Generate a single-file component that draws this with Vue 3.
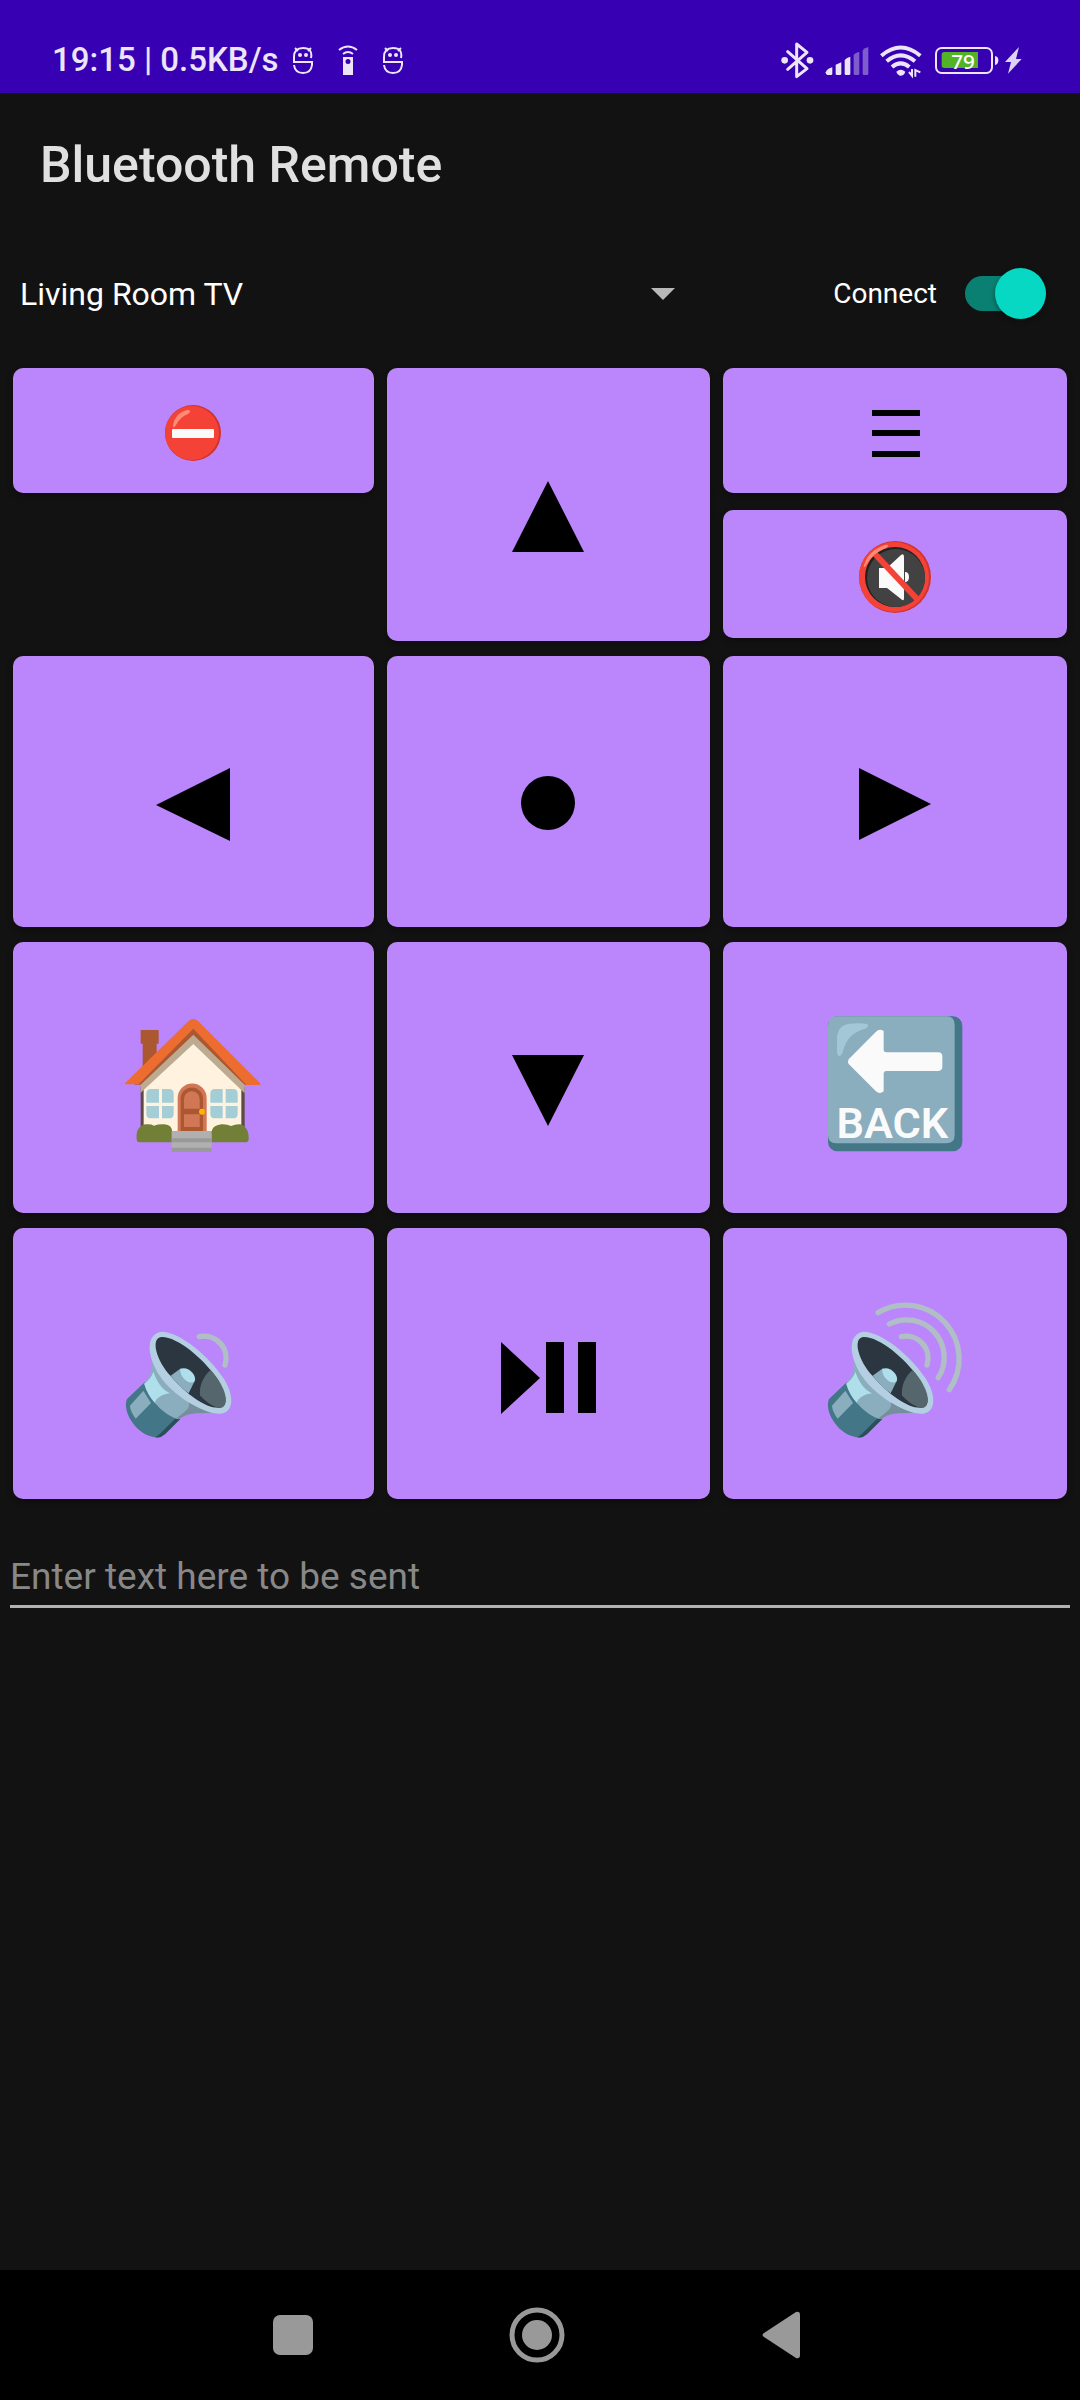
<script setup>
import { ref } from 'vue'

const device = ref('Living Room TV')
const connected = ref(true)
const message = ref('')

const nearWave = 'M274 171A66 66 0 0 1 351 256'
const volumeKeys = [
  { label: 'Volume down', box: '33 28 450 450', waves: [nearWave] },
  {
    label: 'Volume up',
    box: '30 28 450 450',
    waves: [nearWave, 'M238 133A113 113 0 0 1 385 294', 'M204 99A161 161 0 0 1 418 330']
  }
]
</script>

<template>
  <div class="screen">
    <header class="status">
      <div class="status-left">
        <span class="clock">19:15 | 0.5KB/s</span>
        <svg class="note" viewBox="0 0 20 40" aria-hidden="true">
          <path d="M18 18Q20 8 10 8Q1 8 1 17V22H19V25Q18 33 10 33Q2 33 1 25M2 8L5 11M18 8L15 11" fill="none" stroke="#ebe5f7" stroke-width="2" />
          <circle cx="7" cy="15" r="2" fill="#ebe5f7" /><circle cx="13" cy="15" r="2" fill="#ebe5f7" />
        </svg>
        <svg class="note" viewBox="0 0 20 40" aria-hidden="true">
          <path d="M1 10Q10 3 19 10M5 14Q10 10 15 14" fill="none" stroke="#ebe5f7" stroke-width="2" />
          <path fill="#ebe5f7" fill-rule="evenodd" d="M5 17H15V35H5ZM10 19A2 2 0 1 0 10 24A2 2 0 1 0 10 19" />
        </svg>
        <svg class="note" viewBox="0 0 20 40" aria-hidden="true">
          <path d="M18 18Q20 8 10 8Q1 8 1 17V22H19V25Q18 33 10 33Q2 33 1 25M2 8L5 11M18 8L15 11" fill="none" stroke="#ebe5f7" stroke-width="2" />
          <circle cx="7" cy="15" r="2" fill="#ebe5f7" /><circle cx="13" cy="15" r="2" fill="#ebe5f7" />
        </svg>
      </div>
      <div class="status-right">
        <svg width="35" height="40" viewBox="120 60 105 120" aria-hidden="true">
          <path d="M143 95L201 146L170 170V72L201 97L143 148" fill="none" stroke="#ebe5f7" stroke-width="9" stroke-linejoin="round" stroke-linecap="round" />
          <circle cx="134" cy="121" r="10" fill="#ebe5f7" /><circle cx="210" cy="121" r="10" fill="#ebe5f7" />
        </svg>
        <svg width="44" height="40" viewBox="255 60 132 120" aria-hidden="true">
          <g fill="#ebe5f7">
            <path d="M257 157Q262 145 277 142V161Q277 165 273 165H262Q257 165 257 157Z" />
            <path d="M287 134L304 127V161Q304 165 300 165H291Q287 165 287 161Z" />
            <path d="M314 120Q320 112 331 110V161Q331 165 327 165H318Q314 165 314 161Z" />
            <path opacity="0.4" d="M341 104Q347 98 358 95V161Q358 165 354 165H345Q341 165 341 161Z" />
            <path opacity="0.4" d="M368 91Q374 84 385 81V161Q385 165 381 165H372Q368 165 368 161Z" />
          </g>
        </svg>
        <svg width="44" height="40" viewBox="417 60 132 120" aria-hidden="true">
          <g fill="none" stroke="#ebe5f7" stroke-width="12">
            <path d="M424 107Q482 58 541 107" /><path d="M440 124Q482 88 525 124" /><path d="M456 141Q482 119 508 141" />
          </g>
          <path fill="#ebe5f7" d="M469 155Q482 143 496 155Q492 167 482 167Q473 166 469 155Z" />
          <path d="M507 156L516 167V147M526 170V150L541 157" fill="none" stroke="#ebe5f7" stroke-width="6" />
        </svg>
        <svg width="89" height="40" viewBox="579 60 267 120" role="img" aria-label="Battery 79 percent, charging">
          <rect x="588" y="84" width="168" height="75" rx="17" fill="none" stroke="#ebe5f7" stroke-width="6" />
          <path d="M613 96H714V144H613Q605 144 605 136V104Q605 96 613 96Z" fill="#52b424" />
          <path d="M765 108Q775 109 775 121T765 135Z" fill="#ebe5f7" />
          <text x="669" y="147" text-anchor="middle" class="charge">79</text>
          <path d="M837 81L795 126H813L804 161L845 117H828Z" fill="#dcd2f2" />
        </svg>
      </div>
    </header>

    <h1 class="title">Bluetooth Remote</h1>

    <div class="device-row">
      <div class="picker">
        <select v-model="device" aria-label="Device">
          <option>Living Room TV</option>
        </select>
      </div>
      <label class="connect">
        <span>Connect</span>
        <input v-model="connected" type="checkbox" role="switch" />
      </label>
    </div>

    <main class="pad">
      <div class="stack">
        <button class="key" aria-label="Power off">
          <svg width="100" height="100" viewBox="1 0 100 100">
            <circle cx="50" cy="52" r="28" fill="#cf3331" /><circle cx="49" cy="52" r="27" fill="#f44336" />
            <rect x="29" y="48" width="42" height="9" rx="1" fill="#fafafa" />
            <path d="M30 44Q32 32 44 29Q50 29 45 33Q37 36 33 44Q30 49 30 44Z" fill="#ff8a75" />
          </svg>
        </button>
      </div>
      <button class="key" aria-label="Up">
        <svg width="150" height="150" viewBox="1 0 150 150"><path d="M75 51L111 122H39Z" /></svg>
      </button>
      <div class="stack">
        <button class="key" aria-label="Menu">
          <svg width="100" height="100" viewBox="0 0 100 100"><path d="M27 29H75V35H27ZM27 49H75V55H27ZM27 70H75V76H27Z" /></svg>
        </button>
        <button class="key" aria-label="Mute">
          <svg width="100" height="100" viewBox="0 0 100 100">
            <circle cx="50" cy="53" r="36" fill="#cf3331" /><circle cx="49" cy="53" r="35" fill="#f44336" />
            <circle cx="50" cy="53" r="30" fill="#212121" /><circle cx="51" cy="54" r="29" fill="#424242" />
            <path d="M34 44H42L56 31Q59 29 59 33V74Q59 78 56 75L42 64H34Z" fill="#fafafa" />
            <path d="M60 48Q64 48 64 53T60 58Z" fill="#fafafa" />
            <path d="M30 30L73 76" stroke="#f44336" stroke-width="6" />
            <path d="M19 41Q24 26 40 21Q46 20 41 24Q28 29 22 40Q18 46 19 41Z" fill="#ff8a75" />
          </svg>
        </button>
      </div>

      <button class="key" aria-label="Left">
        <svg width="150" height="150" viewBox="1 0 150 150"><path d="M38 88L112 51V124Z" /></svg>
      </button>
      <button class="key" aria-label="Select">
        <svg width="150" height="150" viewBox="0 0 150 150"><circle cx="74" cy="86" r="27" /></svg>
      </button>
      <button class="key" aria-label="Right">
        <svg width="150" height="150" viewBox="0 0 150 150"><path d="M39 51L111 87L39 123Z" /></svg>
      </button>

      <button class="key" aria-label="Home">
        <svg width="150" height="150" viewBox="58 9 450 450">
          <path fill="#ab5730" d="M123 90H177V131H171V170L129 208V131H123Z" />
          <path fill="#5d4a43" d="M123 260H435V400H123Z" />
          <path fill="#fff3e0" d="M281 125L425 262V394H132V262Z" />
          <path fill="#bcaa91" d="M281 97L435 247V280L281 132L123 278V247Z" />
          <path fill="#ab5730" d="M281 80L455 254H435L281 104L123 254H104Z" />
          <path fill="#ed6c30" d="M76 250L266 64Q281 49 296 64L482 250Q484 255 478 255H440L281 86L117 253H80Q75 253 76 250Z" />
          <path fill="#d27756" d="M234 394V295A43 44 0 0 1 321 295V394Z" />
          <path fill="#ab5730" d="M243 394V297A33 34 0 0 1 310 297V394Z" />
          <path fill="#d27756" d="M253 326V298A23 24 0 0 1 300 298V326ZM253 343H300V381H253Z" />
          <circle cx="307" cy="335" r="9" fill="#ffb300" />
          <path fill="#a5cdd5" d="M154 267H178V308H140V281Q140 267 154 267ZM187 267H208Q222 267 222 281V308H187ZM140 318H178V355H154Q140 355 140 341ZM187 318H222V341Q222 355 208 355H187ZM346 267H369V308H332V281Q332 267 346 267ZM378 267H400Q414 267 414 281V308H378ZM332 318H369V355H346Q332 355 332 341ZM378 318H414V341Q414 355 400 355H378Z" />
          <path fill="#728037" d="M111 418C108 390 120 374 140 373Q155 372 163 377Q176 372 194 373Q218 374 218 398V427H120Q111 427 111 418ZM335 427V398Q337 376 365 373Q382 372 394 378Q408 372 421 373C438 376 449 395 447 418Q447 427 438 427Z" />
          <path fill="#b0b0b0" d="M216 393H336V456H216Z" /><path fill="#999" d="M216 415H336V427H216ZM216 443H336V456H216Z" />
        </svg>
      </button>
      <button class="key" aria-label="Down">
        <svg width="150" height="150" viewBox="1 1 150 150"><path d="M39 53H111L75 124Z" /></svg>
      </button>
      <button class="key" aria-label="Back">
        <svg width="150" height="150" viewBox="30 8 450 450">
          <rect x="54" y="48" width="403" height="405" rx="28" fill="#437687" />
          <path fill="#8baebf" d="M82 48H410Q434 48 434 74V404Q434 429 409 429H78Q54 429 54 404V76Q54 48 82 48Z" />
          <path fill="#a2c7d7" d="M81 150V110Q84 74 120 70Q150 67 171 71Q180 77 166 85Q115 98 101 145Q96 167 87 167Q81 166 81 150Z" />
          <path fill="#fafafa" d="M116 177L198 94Q208 84 221 92V150Q222 156 229 156H385Q397 157 397 168V200Q397 211 385 212H229Q222 212 221 219V273Q209 284 197 272L116 191Q112 184 116 177Z" />
          <text x="247" y="412" text-anchor="middle" class="back-text">BACK</text>
        </svg>
      </button>

      <button class="key" :aria-label="volumeKeys[0].label">
        <svg width="150" height="150" :viewBox="volumeKeys[0].box">
          <symbol id="speaker" viewBox="0 0 540 540">
            <path fill="#437687" d="M110 308L57 358C40 395 90 478 156 473L216 418C175 395 135 360 110 308Z" />
            <path fill="#2a4f5b" d="M142 473Q158 476 172 463L217 418L206 413L156 462Q148 468 142 473Z" />
            <path fill="#8baebf" d="M132 215C137 270 128 290 108 312C125 360 165 405 212 419C238 398 270 400 310 398Z" />
            <path fill="#b0dfec" d="M136 276C147 308 163 330 186 341C159 345 146 355 140 369C125 352 115 335 109 312C122 302 132 290 136 276Z" />
            <path fill="#778f9c" d="M238 360C250 382 242 388 206 415L214 419C238 398 266 401 312 400Z" />
            <path fill="#8baebf" d="M106 333L129 370L83 417Q67 395 66 378Z" />
            <path fill="#b3cfe1" d="M160 156C215 155 305 232 346 295C378 345 380 395 340 402C290 406 195 348 158 292C120 238 108 164 160 156Z" />
            <path fill="#2c3640" d="M160 172C206 170 285 235 326 295C360 350 360 381 336 384C296 388 238 347 188 289C146 245 126 176 160 172Z" />
            <path fill="#56666d" d="M308 271C285 290 273 320 276 347C296 371 322 386 341 384C362 374 359 329 308 271Z" />
            <path fill="#8baebf" d="M188 288L219 266L260 304L242 341C223 327 205 310 188 288Z" />
            <path fill="#b0dfec" d="M217 268C238 257 268 285 260 305C242 319 214 290 217 268Z" />
          </symbol>
          <use href="#speaker" x="0" y="0" width="540" height="540" />
          <path v-for="wave in volumeKeys[0].waves" :key="wave" :d="wave" class="wave" />
        </svg>
      </button>
      <button class="key" aria-label="Play or pause">
        <svg width="150" height="150" viewBox="1 0 150 150"><path d="M28 53L67 89L28 125ZM73 53H91V124H73ZM105 53H123V124H105Z" /></svg>
      </button>
      <button class="key" :aria-label="volumeKeys[1].label">
        <svg width="150" height="150" :viewBox="volumeKeys[1].box">
          <use href="#speaker" x="0" y="0" width="540" height="540" />
          <path v-for="wave in volumeKeys[1].waves" :key="wave" :d="wave" class="wave" />
        </svg>
      </button>
    </main>

    <input v-model="message" class="message" type="text" placeholder="Enter text here to be sent" aria-label="Text to send" />

    <nav class="system">
      <button aria-label="Recent apps"><svg width="60" height="60" viewBox="0 0 60 60"><rect x="10" y="10" width="40" height="40" rx="7" /></svg></button>
      <button aria-label="Home screen">
        <svg width="60" height="60" viewBox="0 0 60 60"><circle cx="30" cy="30" r="25" fill="none" stroke="#999" stroke-width="5" /><circle cx="30" cy="30" r="15" /></svg>
      </button>
      <button aria-label="Go back"><svg width="60" height="60" viewBox="0 0 60 60"><path d="M13 28L45 7Q49 6 49 10V50Q49 54 45 53L13 32Q10 30 13 28Z" /></svg></button>
    </nav>
  </div>
</template>

<style>
body {
  background: #121212;
}
</style>

<style scoped>
* {
  box-sizing: border-box;
}
.screen {
  display: flex;
  flex-direction: column;
  min-height: 100vh;
  background: #121212;
  color: #fff;
  font-family: Roboto, "Liberation Sans", sans-serif;
}
svg {
  display: block;
  flex: none;
}
button {
  border: 0;
  padding: 0;
  font: inherit;
}
.status {
  display: flex;
  justify-content: space-between;
  padding: 40px 58px 13px 52px;
  background: #3700b3;
  color: #ebe5f7;
}
.status-left,
.status-right {
  display: flex;
  align-items: center;
}
.status-right {
  gap: 10px;
}
.clock {
  font-size: 33px;
  font-weight: 500;
  line-height: 42px;
  margin-right: 14px;
}
.status svg {
  height: 40px;
}
.note {
  width: 20px;
  margin-right: 25px;
}
.charge {
  font: 500 62px "Noto Sans", sans-serif;
  fill: #fff;
}
.title {
  margin: 0;
  padding: 40px 40px 38px;
  font-size: 50px;
  font-weight: 500;
  line-height: 64px;
  color: #e0e0e0;
}
.status {
  height: 93px;
}
.device-row {
  display: flex;
  align-items: center;
  height: 117px;
  margin-bottom: 16px;
}
.picker {
  position: relative;
  flex: 0 0 65%;
}
.picker::after {
  content: "";
  position: absolute;
  top: 50%;
  right: 27px;
  margin-top: -6px;
  border: 12px solid transparent;
  border-top-color: #b8b8b8;
  border-bottom-width: 0;
  pointer-events: none;
}
.picker select {
  appearance: none;
  display: block;
  width: 100%;
  height: 60px;
  padding: 0 60px 0 20px;
  border: 0;
  background: transparent;
  color: #fff;
  font-family: inherit;
  font-size: 32px;
}
.connect {
  flex: 1;
  display: flex;
  justify-content: flex-end;
  align-items: center;
  gap: 28px;
  padding-right: 34px;
  font-size: 28px;
  line-height: 36px;
}
.connect input {
  appearance: none;
  position: relative;
  width: 81px;
  height: 51px;
  margin: 0;
}
.connect input::before {
  content: "";
  position: absolute;
  inset: 8px 5px 8px 0;
  border-radius: 18px;
  background: #0a8073;
}
.connect input::after {
  content: "";
  position: absolute;
  top: 0;
  left: 0;
  width: 51px;
  height: 51px;
  border-radius: 50%;
  background: #07d8c4;
  box-shadow: 0 2px 5px rgba(0, 0, 0, 0.4);
}
.connect input:checked::after {
  left: auto;
  right: 0;
}
.pad {
  display: grid;
  grid-template-columns: 361fr 323fr 344fr;
  grid-template-rows: 273px;
  grid-auto-rows: 271px;
  gap: 15px 13px;
  padding: 0 13px;
}
.stack {
  display: grid;
  grid-template-rows: 125px 128px;
  gap: 17px;
}
.key {
  display: flex;
  align-items: center;
  justify-content: center;
  border-radius: 10px;
  background: #bb86fc;
  box-shadow: 0 3px 6px rgba(0, 0, 0, 0.3);
}
.wave {
  fill: none;
  stroke: #b0bec5;
  stroke-width: 16px;
  stroke-linecap: round;
}
.back-text {
  font: 600 130px Roboto, sans-serif;
  fill: #fafafa;
}
.message {
  height: 64px;
  margin: 45px 10px 0;
  padding: 4px 0 0;
  border: 0;
  border-bottom: 3px solid #b0b3b2;
  background: transparent;
  color: #fff;
  font-family: inherit;
  font-size: 37px;
}
.message::placeholder {
  color: #888;
  opacity: 1;
}
.system {
  display: flex;
  justify-content: center;
  gap: 184px;
  margin-top: auto;
  padding: 35px 6px 35px 0;
  background: #000;
}
.system button {
  background: transparent;
  fill: #999;
}
</style>
